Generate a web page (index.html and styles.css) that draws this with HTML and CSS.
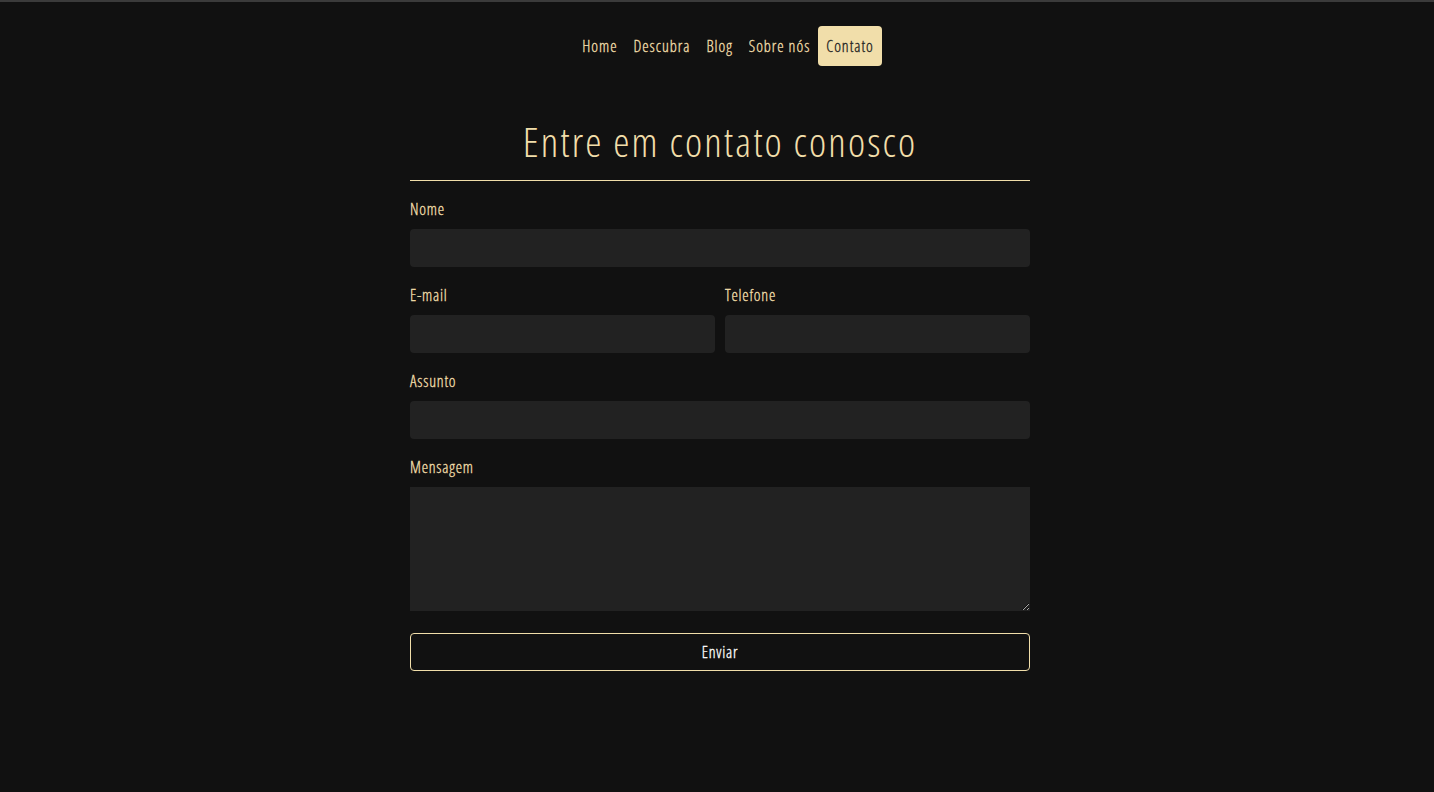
FILE: index.html
```html
<!DOCTYPE html>
<html lang="pt">
<head>
<meta charset="utf-8">
<title>Contato</title>
<link rel="stylesheet" href="styles.css">
</head>
<body>
<header class="topnav">
  <nav class="menu">
    <a class="menu-link" href="#">Home</a>
    <a class="menu-link" href="#">Descubra</a>
    <a class="menu-link" href="#">Blog</a>
    <a class="menu-link" href="#">Sobre nós</a>
    <a class="menu-link active" href="#">Contato</a>
  </nav>
</header>
<main class="contact">
  <h1 class="title">Entre em contato conosco</h1>
  <form class="form">
    <div class="field">
      <label class="label">Nome</label>
      <input class="input" type="text">
    </div>
    <div class="row">
      <div class="field">
        <label class="label">E-mail</label>
        <input class="input" type="email">
      </div>
      <div class="field">
        <label class="label">Telefone</label>
        <input class="input" type="tel">
      </div>
    </div>
    <div class="field">
      <label class="label">Assunto</label>
      <input class="input" type="text">
    </div>
    <div class="field">
      <label class="label">Mensagem</label>
      <textarea class="input textarea"></textarea>
    </div>
    <button class="submit" type="button">Enviar</button>
  </form>
</main>
</body>
</html>
```

FILE: styles.css
```css
* { box-sizing: border-box; }
html, body { height: 100%; }
body {
  margin: 0;
  background: #111111;
  border-top: 2px solid #3b3b3b;
  font-family: "Open Sans", "DejaVu Sans Condensed", sans-serif;
  font-stretch: 75%;
  font-weight: 300;
  color: #f1deaa;
  padding-left: 6px;
}
.topnav {
  display: flex;
  justify-content: center;
  padding-top: 24px;
  padding-left: 16px;
}
.menu {
  display: flex;
}
.menu-link {
  display: flex;
  align-items: center;
  height: 40px;
  padding: 0 8px;
  font-size: 16px;
  letter-spacing: 1px;
  -webkit-text-stroke: 0.3px currentColor;
  color: #f1deaa;
  text-decoration: none;
  border-radius: 4px;
}
.menu-link.active {
  background: #f1deaa;
  color: #222222;
}
.contact {
  width: 620px;
  margin: 0 auto;
  padding-top: 52px;
}
.title {
  margin: 0;
  font-size: 41px;
  font-weight: 300;
  letter-spacing: 2.1px;
  text-align: center;
  line-height: 46px;
  padding-bottom: 16px;
  border-bottom: 1px solid #f1deaa;
  margin-bottom: 18px;
}
.form {
  display: flex;
  flex-direction: column;
}
.row {
  display: flex;
  gap: 10px;
}
.row .field { flex: 1; }
.field {
  display: flex;
  flex-direction: column;
  margin-bottom: 18px;
}
.label {
  font-size: 16px;
  letter-spacing: 0.8px;
  -webkit-text-stroke: 0.3px currentColor;
  line-height: 20px;
  margin-bottom: 10px;
}
.input {
  height: 38px;
  background: #222222;
  border: none;
  border-radius: 4px;
  color: #ffffff;
  font-family: inherit;
  font-stretch: inherit;
  font-size: 16px;
  padding: 0 10px;
  outline: none;
}
.textarea {
  height: 124px;
  border-radius: 0;
  resize: vertical;
  padding: 10px;
}
.submit {
  margin-top: 4px;
  height: 38px;
  background: transparent;
  border: 1px solid #f1deaa;
  border-radius: 4px;
  color: #ffffff;
  font-family: inherit;
  font-stretch: inherit;
  font-weight: inherit;
  letter-spacing: 0.8px;
  -webkit-text-stroke: 0.3px currentColor;
  font-size: 16px;
}
```
